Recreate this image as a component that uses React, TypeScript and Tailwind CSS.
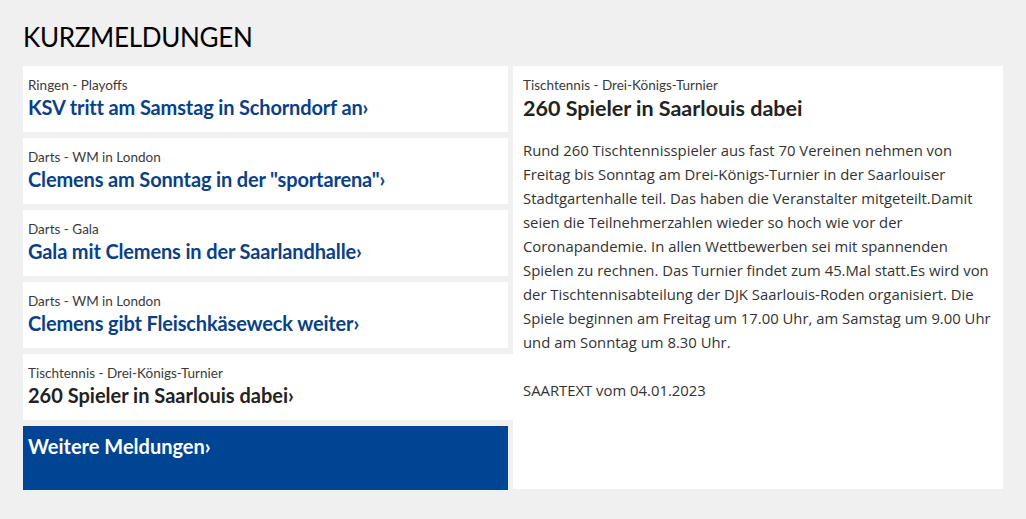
import React from "react";

const items = [
  { cat: "Ringen - Playoffs", title: "KSV tritt am Samstag in Schorndorf an" },
  { cat: "Darts - WM in London", title: 'Clemens am Sonntag in der "sportarena"' },
  { cat: "Darts - Gala", title: "Gala mit Clemens in der Saarlandhalle" },
  { cat: "Darts - WM in London", title: "Clemens gibt Fleischkäseweck weiter" },
];

const body = [
  "Rund 260 Tischtennisspieler aus fast 70 Vereinen nehmen von",
  "Freitag bis Sonntag am Drei-Königs-Turnier in der Saarlouiser",
  "Stadtgartenhalle teil. Das haben die Veranstalter mitgeteilt.Damit",
  "seien die Teilnehmerzahlen wieder so hoch wie vor der",
  "Coronapandemie. In allen Wettbewerben sei mit spannenden",
  "Spielen zu rechnen. Das Turnier findet zum 45.Mal statt.Es wird von",
  "der Tischtennisabteilung der DJK Saarlouis-Roden organisiert. Die",
  "Spiele beginnen am Freitag um 17.00 Uhr, am Samstag um 9.00 Uhr",
  "und am Sonntag um 8.30 Uhr.",
];

export default function App() {
  return (
    <div
      className="w-[1026px] h-[519px] bg-[#f0f0f0] px-[23px] pt-[20px]"
      style={{ fontFamily: "Lato, 'Noto Sans', sans-serif" }}
    >
      <h1 className="text-[26px] leading-[34px] font-normal text-black mb-[12px] tracking-[-0.3px]">
        KURZMELDUNGEN
      </h1>
      <div className="flex">
        <div className="w-[485px] flex flex-col gap-[6px]">
          {items.map((it, i) => (
            <div key={i} className="bg-white h-[66px] px-[5px] pt-[11px]">
              <div className="text-[13.5px] leading-[16px] text-[#3a3a3a]">{it.cat}</div>
              <div className="text-[20px] leading-[28px] font-bold text-[#0b3f86] tracking-[-0.15px]">
                {it.title}›
              </div>
            </div>
          ))}
          <div className="bg-white h-[66px] px-[5px] pt-[11px] w-[490px]">
            <div className="text-[13.5px] leading-[16px] text-[#3a3a3a]">Tischtennis - Drei-Königs-Turnier</div>
            <div className="text-[20px] leading-[28px] font-bold text-[#222]">260 Spieler in Saarlouis dabei›</div>
          </div>
          <div className="bg-[#004593] h-[64px] px-[5px] pt-[6px]">
            <div className="text-[20px] leading-[28px] font-bold text-white">Weitere Meldungen›</div>
          </div>
        </div>
        <div className="ml-[5px] w-[490px] h-[423px] bg-white px-[10px] pt-[11px]">
          <div className="text-[13.5px] leading-[16px] text-[#3a3a3a]">Tischtennis - Drei-Königs-Turnier</div>
          <div className="text-[21.5px] leading-[30px] font-bold text-[#222] mb-[15px]">260 Spieler in Saarlouis dabei</div>
          <p
            className="text-[14.85px] leading-[24px] text-[#333] whitespace-nowrap"
            style={{ fontFamily: "'Open Sans', 'Noto Sans', sans-serif" }}
          >
            {body.map((l, i) => (
              <React.Fragment key={i}>
                {l}
                {i < body.length - 1 && <br />}
              </React.Fragment>
            ))}
          </p>
          <p
            className="text-[14.85px] leading-[24px] text-[#333] mt-[24px]"
            style={{ fontFamily: "'Open Sans', 'Noto Sans', sans-serif" }}
          >
            SAARTEXT vom 04.01.2023
          </p>
        </div>
      </div>
    </div>
  );
}
